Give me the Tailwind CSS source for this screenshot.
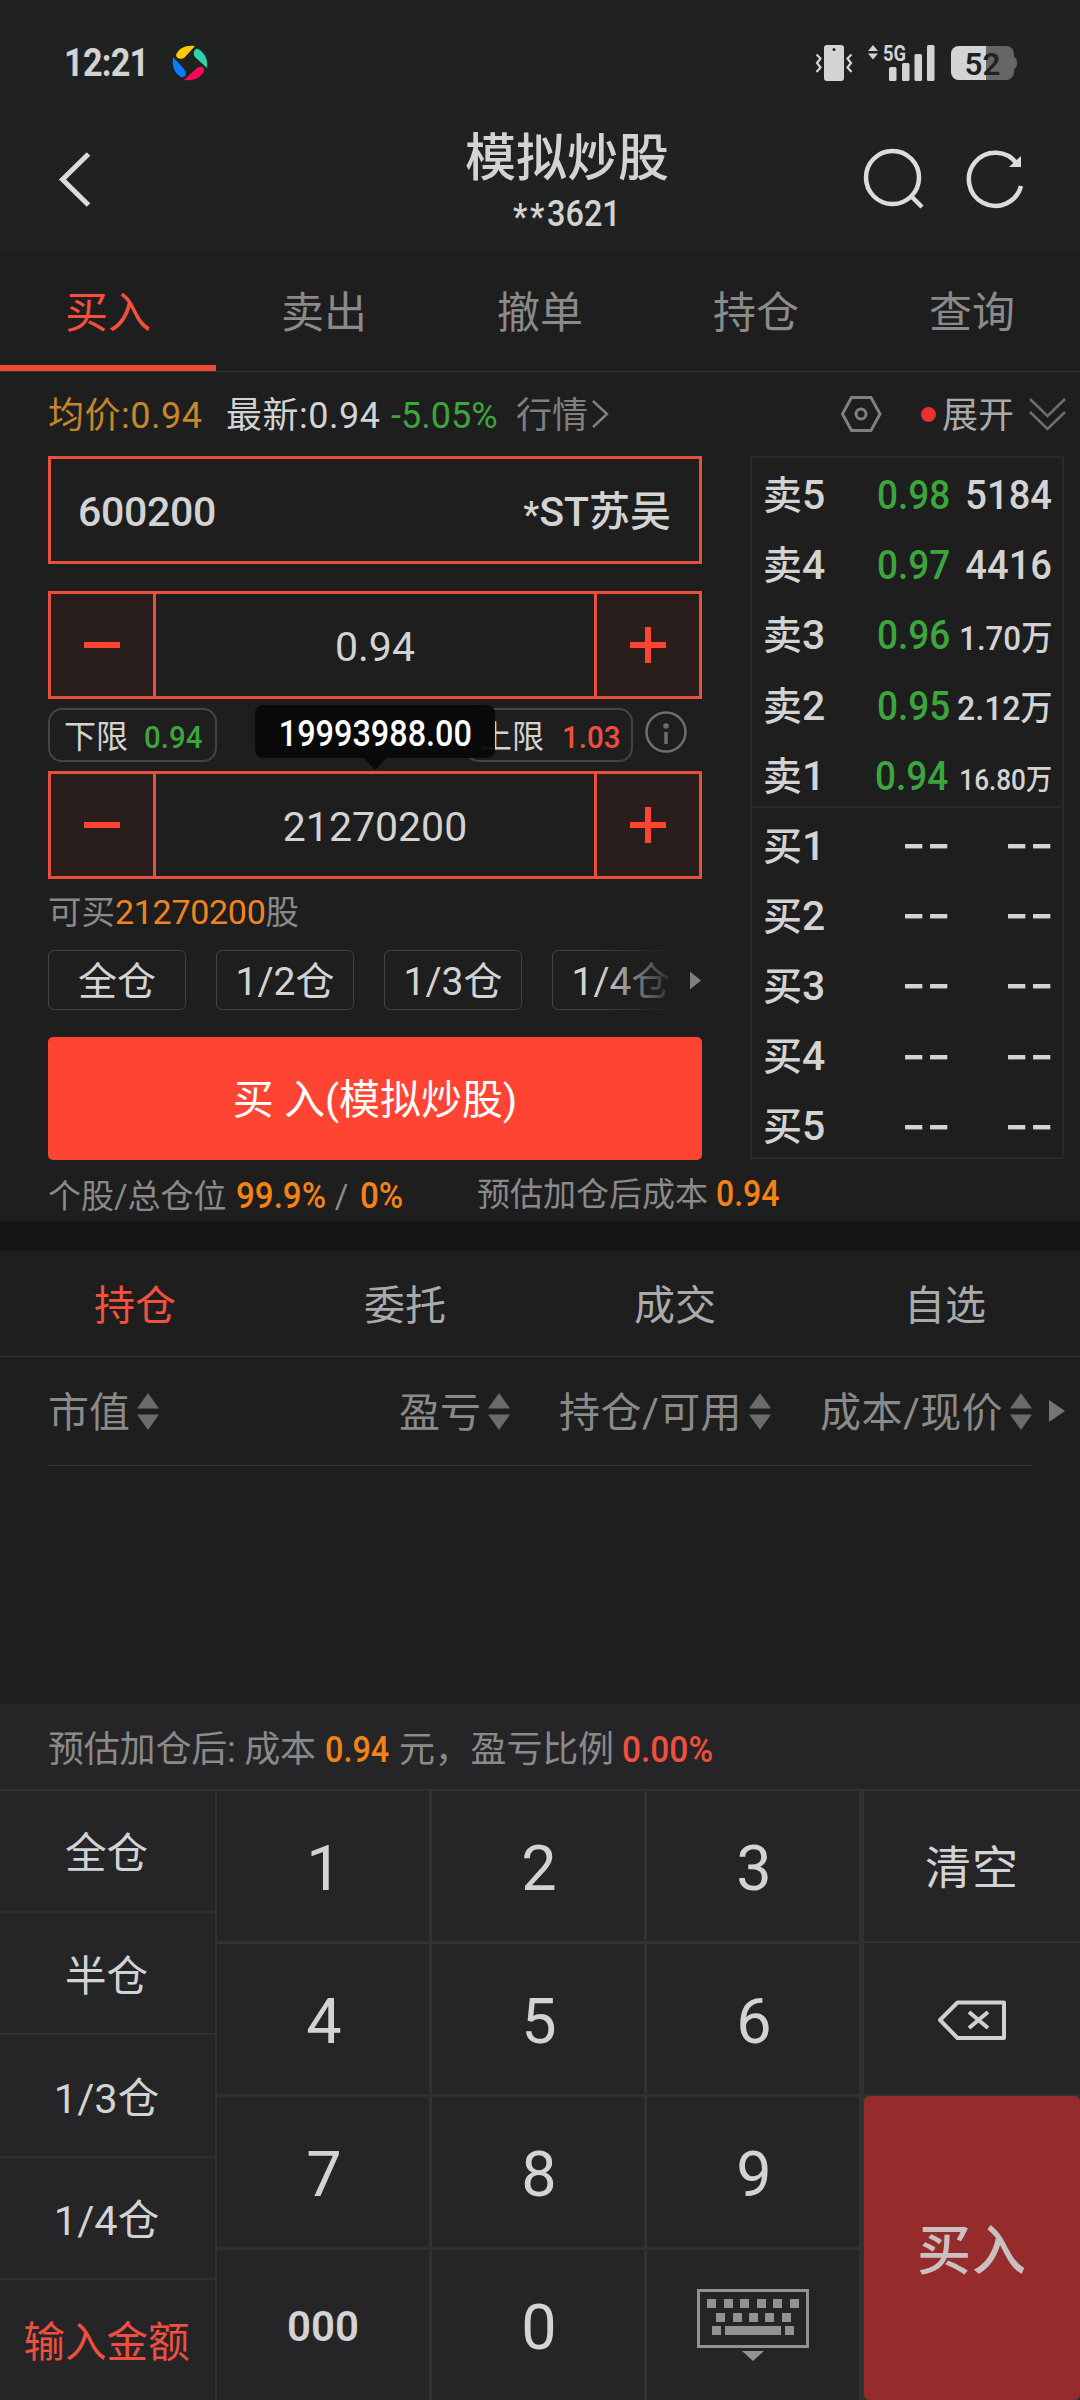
<!DOCTYPE html>
<html lang="zh-CN">
<head>
  <meta charset="UTF-8">
  <meta name="viewport" content="width=device-width, initial-scale=1.0">
  <title>模拟炒股</title>
  <script src="https://cdn.jsdelivr.net/npm/@tailwindcss/browser@4"></script>
</head>
<body class="w-[1080px] h-[2400px] overflow-hidden flex flex-col bg-[#1e1e1e] text-[#d3d3d3] leading-none whitespace-nowrap font-['Roboto','Noto_Sans_CJK_SC',sans-serif]">

  <!-- status bar + title -->
  <header class="h-[251px] shrink-0 bg-[#202221]">
    <div class="h-[126px] pl-[64px] pr-[63px] flex items-center justify-between">
      <div class="flex items-center">
        <span class="w-[108px] origin-left scale-x-90 text-[38px] font-bold tracking-[-0.8px]">12:21</span>
        <svg class="w-[36px] h-[36px]" viewBox="0 0 36 36">
          <path fill="#ffcd00" d="M4 10C7 3 14 0 23 1L13 12C10 15 4 14 4 10Z"/>
          <path fill="#2ed3a8" d="M26 4C33 8 36 14 35 23L23 12C20 8 23 3 26 4Z"/>
          <path fill="#ff0855" d="M32 26C29 33 22 36 12 35L24 24C28 20 33 22 32 26Z"/>
          <path fill="#0a7cff" d="M9 32C2 28 0 21 1 12L12 24C16 29 13 33 9 32Z"/>
        </svg>
      </div>
      <div class="flex items-center">
        <svg class="w-[120px] h-[58px]" viewBox="815 33 120 58" fill="#d3d3d3">
          <rect x="824" y="44" width="20" height="36" rx="3"/>
          <circle cx="834" cy="48.500" r="1.500" fill="#202221"/>
          <g fill="none" stroke="#d3d3d3" stroke-width="2.200">
            <path d="M816.500 53.500l4 4-3.500 4.500 3.500 4.500-4 4.500"/>
            <path d="M851.500 53.500l-4 4 3.500 4.500-3.500 4.500 4 4.500"/>
          </g>
          <path d="M868 50l5-6 5 6zM868 52.500l5 6 5-6z"/>
          <text x="883" y="59.500" font-size="22" font-weight="700" textLength="23" lengthAdjust="spacingAndGlyphs">5G</text>
          <rect x="889" y="66" width="7.500" height="14" rx="1.500"/>
          <rect x="902" y="62" width="7.500" height="18" rx="1.500"/>
          <rect x="914.500" y="53" width="7.500" height="27" rx="1.500"/>
          <rect x="927" y="44" width="7.500" height="36" rx="1.500"/>
        </svg>
        <svg class="ml-[16px] w-[66px] h-[50px]" viewBox="0 -8 66 50">
          <rect width="63" height="34" rx="8" fill="#666"/>
          <path fill="#666" d="M63 11q3 1 3 6t-3 6z"/>
          <path fill="#d3d5d4" d="M8 0H35V34H8A8 8 0 0 1 0 26V8A8 8 0 0 1 8 0Z"/>
          <text x="13.500" y="28.500" font-size="32" font-weight="600" textLength="36" lengthAdjust="spacingAndGlyphs" fill="#202221">52</text>
        </svg>
      </div>
    </div>
    <div class="h-[125px] pl-[58px] pr-[56px] flex">
      <svg class="w-[33px] h-[60px] mt-[24px]" viewBox="58 150 33 60" fill="none" stroke="#dcdcdc" stroke-width="5">
        <path d="M88.500 154L62.500 179.500 88.500 205"/>
      </svg>
      <div class="ml-[361px] w-[230px] flex flex-col items-center">
        <h1 class="mt-[7px] text-[51px] font-medium">模拟炒股</h1>
        <p class="mt-[12px] text-[36px] font-medium scale-x-[.9]"><span class="relative top-[3px] tracking-[3px]">**</span>3621</p>
      </div>
      <svg class="ml-auto w-[164px] h-[64px] mt-[20px]" viewBox="860 146 164 64" fill="none" stroke="#dcdcdc" stroke-width="4.500">
        <circle cx="892.500" cy="177.500" r="26.500"/>
        <path d="M911.500 196.500l10.500 10.500"/>
        <path d="M1017 164A26.500 26.500 0 1 0 1021 186"/>
        <path d="M1021 156v11h-12z" fill="#dcdcdc" stroke="none"/>
      </svg>
    </div>
  </header>

  <!-- main tabs -->
  <nav class="h-[121px] shrink-0 grid grid-cols-5 text-[43px] text-[#8a8a8a] border-b border-[#333] text-center">
    <a class="h-[120px] pt-[41px] text-[#f4503c] border-b-6 border-[#f04a37]">买入</a>
    <a class="pt-[41px]">卖出</a>
    <a class="pt-[41px]">撤单</a>
    <a class="pt-[41px]">持仓</a>
    <a class="pt-[41px]">查询</a>
  </nav>

  <!-- order form -->
  <section class="h-[849px] shrink-0 flex flex-col">
    <div class="h-[84px] shrink-0 pl-[48px] pr-[14px] flex items-center justify-between text-[36px]">
      <div class="flex items-center">
        <span class="w-[178px] pt-[4px] text-[#c8862a] tracking-[0.5px]">均价:0.94</span>
        <span class="w-[165px] pt-[4px] tracking-[0.5px]">最新:0.94</span>
        <span class="w-[125px] pt-[4px] text-[#3ca53c]">-5.05%</span>
        <span class="pt-[4px] text-[#808080]">行情</span>
        <svg class="w-[20px] h-[30px] ml-[3px]" viewBox="0 0 20 30" fill="none" stroke="#808080" stroke-width="2.500"><path d="M2 2L16 15 2 28"/></svg>
      </div>
      <div class="flex items-center text-[#aaa]">
        <svg class="w-[42px] h-[38px]" viewBox="0 0 42 38" fill="none" stroke="#808080" stroke-width="3">
          <path d="M11.500 2.500H31L40 19 31 35.500H11.500L2.500 19Z"/><circle cx="21" cy="19" r="5"/>
        </svg>
        <span class="ml-[39px] size-[15px] rounded-full bg-[#e93030]"></span>
        <span class="ml-[6px] pt-[4px]">展开</span>
        <svg class="ml-[15px] w-[37px] h-[34px]" viewBox="0 0 37 34" fill="none" stroke="#6e6e6e" stroke-width="2.500">
          <path d="M1 2L18.500 19 36 2M1 15L18.500 32 36 15"/>
        </svg>
      </div>
    </div>

    <div class="flex shrink-0">
      <div class="w-[654px] ml-[48px]">
        <div class="h-[108px] pt-[4px] pl-[27px] pr-[28px] flex items-center justify-between border-3 border-[#e84f3d] text-[41px] font-medium">
          <span class="tracking-[-0.3px]">600200</span>
          <span class="flex"><span class="pt-[5px] text-[36px]">*</span>ST苏吴</span>
        </div>
        <div class="mt-[27px] h-[108px] flex border-3 border-[#e84f3d]">
          <button class="w-[105px] grid place-items-center border-r-3 border-[#e84f3d] bg-[#2a1e1d]"><i class="w-[36px] h-[6px] bg-[#fd4332]"></i></button>
          <span class="flex-1 pt-[4px] grid place-items-center text-[41px]">0.94</span>
          <button class="w-[105px] grid place-items-center border-l-3 border-[#e84f3d] bg-[#2a1e1d]">
            <svg class="size-[36px]" viewBox="0 0 36 36" fill="#fd4332"><path d="M15 0h6v15h15v6H21v15h-6V21H0v-6h15z"/></svg>
          </button>
        </div>
        <div class="relative h-[72px] pt-[9px] flex text-[32px]">
          <span class="w-[169px] h-[54px] pt-[4px] pl-[14px] flex items-center gap-[16px] border-2 border-[#444] rounded-[14px]">下限<b class="origin-left scale-x-[.92] font-medium text-[#3ca53c]">0.94</b></span>
          <span class="ml-[248px] w-[168px] h-[54px] pt-[4px] pl-[13px] flex items-center gap-[18px] border-2 border-[#444] rounded-[14px]">上限<b class="origin-left scale-x-[.92] font-medium text-[#ee4f3e]">1.03</b></span>
          <svg class="ml-[12px] mt-[3px] size-[42px]" viewBox="0 0 42 42" fill="none" stroke="#6e6e6e" stroke-width="2.500">
            <circle cx="21" cy="21" r="19.500"/><path d="M21 21v12" stroke-width="3.500"/><circle cx="21" cy="15" r="2.800" fill="#6e6e6e" stroke="none"/>
          </svg>
          <!-- amount tooltip -->
          <div class="absolute left-[207px] top-[6px] w-[240px] h-[53px] pt-[4px] rounded-[8px] bg-[#080808]/95 grid place-items-center text-[36px] font-medium text-white">
            <span class="scale-x-[.9]">19993988.00</span>
            <svg class="absolute top-[53px] left-[109px] w-[22px] h-[12px]" viewBox="0 0 22 12"><path fill="#080808" d="M0 0h22L11 12z"/></svg>
          </div>
        </div>
        <div class="h-[108px] flex border-3 border-[#e84f3d]">
          <button class="w-[105px] grid place-items-center border-r-3 border-[#e84f3d] bg-[#2a1e1d]"><i class="w-[36px] h-[6px] bg-[#fd4332]"></i></button>
          <span class="flex-1 pt-[4px] grid place-items-center text-[41px]">21270200</span>
          <button class="w-[105px] grid place-items-center border-l-3 border-[#e84f3d] bg-[#2a1e1d]">
            <svg class="size-[36px]" viewBox="0 0 36 36" fill="#fd4332"><path d="M15 0h6v15h15v6H21v15h-6V21H0v-6h15z"/></svg>
          </button>
        </div>
        <p class="h-[71px] pt-[16px] text-[33.5px] text-[#8a8a8a]">可买<span class="text-[34px] text-[#ef8420] tracking-[-0.3px]">21270200</span>股</p>
        <div class="flex h-[60px] text-[39px]">
          <div class="relative w-[642px] overflow-hidden flex gap-[30px]">
            <button class="w-[138px] pt-[4px] shrink-0 border border-[#444] rounded-[6px]">全仓</button>
            <button class="w-[138px] pt-[4px] shrink-0 border border-[#444] rounded-[6px]">1/2仓</button>
            <button class="w-[138px] pt-[4px] shrink-0 border border-[#444] rounded-[6px]">1/3仓</button>
            <button class="w-[138px] pt-[4px] shrink-0 border border-[#444] rounded-[6px]">1/4仓</button>
            <div class="absolute right-0 top-0 w-[90px] h-[60px] bg-linear-to-r from-[#1e1e1e]/0 to-[#1e1e1e] to-85%"></div>
          </div>
          <svg class="-ml-[2px] mt-[20px] w-[13px] h-[21px] shrink-0" viewBox="0 0 13 21"><path fill="#808080" d="M0 0l13 10.500L0 21z"/></svg>
        </div>
        <button class="mt-[27px] pt-[4px] w-full h-[123px] rounded-[5px] bg-[#ff4433] text-white text-[41px]">买 入(模拟炒股)</button>
      </div>

      <!-- order book -->
      <div class="ml-[48px] w-[314px] h-[703px] border-2 border-[#292929] text-[41px] font-medium">
        <div class="h-[350px] flex flex-col border-b-2 border-[#292929]">
          <div class="h-[70.2px] shrink-0 pt-[5px] pl-[11px] pr-[10px] flex items-center"><span class="w-[114px]"><span class="text-[39px]">卖</span>5</span><span class="w-[74px] origin-left scale-x-[.9] text-[#3ca53c]">0.98</span><span class="flex-1 text-right origin-right scale-x-[.93]">5184</span></div>
          <div class="h-[70.2px] shrink-0 pt-[5px] pl-[11px] pr-[10px] flex items-center"><span class="w-[114px]"><span class="text-[39px]">卖</span>4</span><span class="w-[74px] origin-left scale-x-[.9] text-[#3ca53c]">0.97</span><span class="flex-1 text-right origin-right scale-x-[.93]">4416</span></div>
          <div class="h-[70.2px] shrink-0 pt-[5px] pl-[11px] pr-[10px] flex items-center"><span class="w-[114px]"><span class="text-[39px]">卖</span>3</span><span class="w-[74px] origin-left scale-x-[.9] text-[#3ca53c]">0.96</span><span class="flex-1 pt-[4px] text-right origin-right scale-x-[.92] text-[34px]">1.70万</span></div>
          <div class="h-[70.2px] shrink-0 pt-[5px] pl-[11px] pr-[10px] flex items-center"><span class="w-[114px]"><span class="text-[39px]">卖</span>2</span><span class="w-[74px] origin-left scale-x-[.9] text-[#3ca53c]">0.95</span><span class="flex-1 pt-[4px] text-right origin-right scale-x-[.94] text-[34px]">2.12万</span></div>
          <div class="h-[70.2px] shrink-0 pt-[5px] pl-[11px] pr-[10px] flex items-center"><span class="w-[114px]"><span class="text-[39px]">卖</span>1</span><span class="w-[74px] origin-left scale-x-[.9] text-[#3ca53c]">0.94</span><span class="flex-1 pt-[8px] text-right origin-right scale-x-[.9] text-[29px]">16.80万</span></div>
        </div>
        <div class="h-[350px] pt-px flex flex-col">
          <div class="h-[70.2px] shrink-0 pt-[4px] pl-[11px] pr-[8px] flex items-center"><span class="w-[114px]"><span class="text-[39px]">买</span>1</span><span class="w-[74px] -mt-[4px] text-right font-['Inter'] font-normal text-[54px]">--</span><span class="flex-1 -mt-[4px] text-right font-['Inter'] font-normal text-[54px]">--</span></div>
          <div class="h-[70.2px] shrink-0 pt-[4px] pl-[11px] pr-[8px] flex items-center"><span class="w-[114px]"><span class="text-[39px]">买</span>2</span><span class="w-[74px] -mt-[4px] text-right font-['Inter'] font-normal text-[54px]">--</span><span class="flex-1 -mt-[4px] text-right font-['Inter'] font-normal text-[54px]">--</span></div>
          <div class="h-[70.2px] shrink-0 pt-[4px] pl-[11px] pr-[8px] flex items-center"><span class="w-[114px]"><span class="text-[39px]">买</span>3</span><span class="w-[74px] -mt-[4px] text-right font-['Inter'] font-normal text-[54px]">--</span><span class="flex-1 -mt-[4px] text-right font-['Inter'] font-normal text-[54px]">--</span></div>
          <div class="h-[70.2px] shrink-0 pt-[4px] pl-[11px] pr-[8px] flex items-center"><span class="w-[114px]"><span class="text-[39px]">买</span>4</span><span class="w-[74px] -mt-[4px] text-right font-['Inter'] font-normal text-[54px]">--</span><span class="flex-1 -mt-[4px] text-right font-['Inter'] font-normal text-[54px]">--</span></div>
          <div class="h-[70.2px] shrink-0 pt-[4px] pl-[11px] pr-[8px] flex items-center"><span class="w-[114px]"><span class="text-[39px]">买</span>5</span><span class="w-[74px] -mt-[4px] text-right font-['Inter'] font-normal text-[54px]">--</span><span class="flex-1 -mt-[4px] text-right font-['Inter'] font-normal text-[54px]">--</span></div>
        </div>
      </div>
    </div>

    <div class="pl-[48px] pt-[16px] flex text-[33px] text-[#8a8a8a]">
      <p class="w-[429px] pt-[2px] flex items-baseline gap-[9px]">个股/总仓位<b class="w-[90px] origin-left scale-x-[.92] text-[36px] font-medium text-[#f48315]">99.9%</b>/<b class="ml-[3px] origin-left scale-x-[.92] text-[36px] font-medium text-[#f48315]">0%</b></p>
      <p class="flex items-baseline gap-[8px]">预估加仓后成本<b class="origin-left scale-x-[.89] text-[36px] font-medium text-[#f48315]">0.94</b></p>
    </div>
  </section>

  <div class="h-[30px] shrink-0 bg-[#161616]"></div>

  <!-- holdings -->
  <section class="h-[453px] shrink-0">
    <nav class="h-[106px] grid grid-cols-4 border-b border-[#333] text-center text-[41px] text-[#aaa]">
      <a class="pt-[35px] text-[#f4503c]">持仓</a>
      <a class="pt-[35px]">委托</a>
      <a class="pt-[35px]">成交</a>
      <a class="pt-[35px]">自选</a>
    </nav>
    <div class="h-[109px] ml-[48px] w-[984px] flex items-center justify-between border-b border-[#333] text-[41px] text-[#8a8a8a]">
      <span class="flex items-center gap-[7px] w-[300px]"><span class="pt-[4px]">市值</span><svg class="w-[22px] h-[37px]" viewBox="0 0 22 37" fill="#6b6b6b"><path d="M0 15.500L11 0l11 15.500zM0 21.500h22L11 37z"/></svg></span>
      <span class="flex items-center justify-end gap-[7px] w-[162px]"><span class="pt-[4px]">盈亏</span><svg class="w-[22px] h-[37px]" viewBox="0 0 22 37" fill="#6b6b6b"><path d="M0 15.500L11 0l11 15.500zM0 21.500h22L11 37z"/></svg></span>
      <span class="flex items-center justify-end gap-[7px] w-[261px]"><span class="pt-[4px] tracking-[0.4px]">持仓/可用</span><svg class="w-[22px] h-[37px]" viewBox="0 0 22 37" fill="#6b6b6b"><path d="M0 15.500L11 0l11 15.500zM0 21.500h22L11 37z"/></svg></span>
      <span class="relative flex items-center justify-end gap-[7px] w-[261px]"><span class="pt-[4px] tracking-[0.4px]">成本/现价</span><svg class="w-[22px] h-[37px]" viewBox="0 0 22 37" fill="#6b6b6b"><path d="M0 15.500L11 0l11 15.500zM0 21.500h22L11 37z"/></svg>
        <svg class="absolute -right-[33px] w-[16px] h-[22px]" viewBox="0 0 16 22"><path fill="#757575" d="M0 0l16 11L0 22z"/></svg>
      </span>
    </div>
  </section>

  <!-- keypad -->
  <section class="h-[696px] shrink-0 bg-[#252527]">
    <p class="h-[87px] pl-[48px] pt-[28px] flex items-baseline text-[36px] text-[#8a8a8a] border-b-2 border-[#313131]">
      <span class="w-[277px] tracking-[-0.2px]">预估加仓后: 成本</span><b class="w-[74px] origin-left scale-x-90 text-[36px] font-medium text-[#f48315]">0.94</b><span class="w-[223px] tracking-[-0.2px]">元，盈亏比例</span><b class="origin-left scale-x-[.93] font-medium text-[#ee4f3e]">0.00%</b>
    </p>
    <div class="h-[609px] flex bg-[#313131]">
      <div class="w-[215px] mr-[2px] grid grid-rows-5 gap-[2px] text-[41.5px]">
        <button class="pt-[6px] pr-[2px] bg-[#252527]">全仓</button>
        <button class="pt-[6px] pr-[2px] bg-[#252527]">半仓</button>
        <button class="pt-[6px] pr-[2px] bg-[#252527]">1/3仓</button>
        <button class="pt-[6px] pr-[2px] bg-[#252527]">1/4仓</button>
        <button class="pt-[6px] pr-[2px] bg-[#252527] text-[#ee4f3e]">输入金额</button>
      </div>
      <div class="w-[642px] grid grid-cols-3 grid-rows-4 gap-[3px] text-[63px]">
        <button class="pt-[4px] pl-[2px] bg-[#252527]">1</button>
        <button class="pt-[4px] pl-[2px] bg-[#252527]">2</button>
        <button class="pt-[4px] pl-[2px] bg-[#252527]">3</button>
        <button class="pt-[4px] pl-[2px] bg-[#252527]">4</button>
        <button class="pt-[4px] pl-[2px] bg-[#252527]">5</button>
        <button class="pt-[4px] pl-[2px] bg-[#252527]">6</button>
        <button class="pt-[4px] pl-[2px] bg-[#252527]">7</button>
        <button class="pt-[4px] pl-[2px] bg-[#252527]">8</button>
        <button class="pt-[4px] pl-[2px] bg-[#252527]">9</button>
        <button class="pt-[4px] bg-[#252527] text-[42px] font-semibold">000</button>
        <button class="pt-[4px] pl-[2px] bg-[#252527]">0</button>
        <button class="bg-[#252527] grid place-items-center">
          <svg class="w-[112px] h-[72px]" viewBox="0 0 112 72" fill="#929292">
            <rect x="1.500" y="1.500" width="109" height="56" fill="none" stroke="#929292" stroke-width="3"/>
            <path d="M10 10h9v9h-9zM27 10h9v9h-9zM43 10h9v9h-9zM60 10h9v9h-9zM76 10h9v9h-9zM93 10h9v9h-9z"/>
            <path d="M19 24h9v9h-9zM36 24h9v9h-9zM52 24h9v9h-9zM68 24h9v9h-9zM85 24h9v9h-9z"/>
            <path d="M15 37h9v9h-9zM28 37h56v9H28zM88 37h9v9h-9zM45 62h22L56 72z"/>
          </svg>
        </button>
      </div>
      <div class="ml-[5px] w-[216px] flex flex-col">
        <button class="h-[150px] pt-[4px] mb-[2px] bg-[#252527] text-[46px] tracking-[1px]">清空</button>
        <button class="h-[151px] mb-[2px] bg-[#252527] grid place-items-center">
          <svg class="w-[70px] h-[42px]" viewBox="0 -2 70 42" fill="none" stroke="#d0d0d0" stroke-width="4" stroke-linejoin="round">
            <path d="M20.500 2.500H67V38H20.500L3 20Z"/><path d="M32 12l19 16M51 12l-19 16"/>
          </svg>
        </button>
        <button class="h-[304px] pt-[7px] rounded-[6px] bg-[#962b2c] text-[#cbc0c0] text-[54px] tracking-[1px] font-medium">买入</button>
      </div>
    </div>
  </section>
</body>
</html>
